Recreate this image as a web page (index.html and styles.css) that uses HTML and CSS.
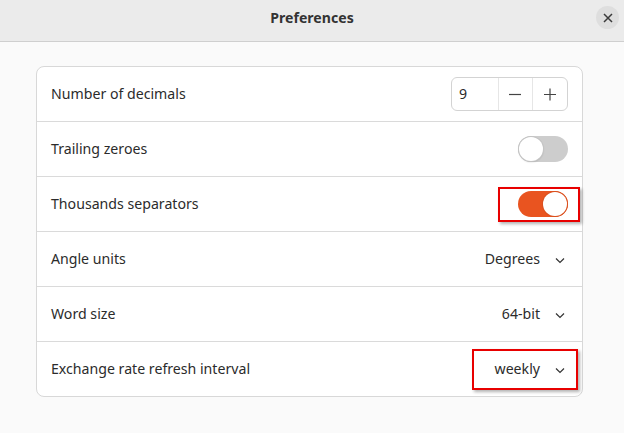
FILE: index.html
```html
<!DOCTYPE html>
<html>
<head>
<meta charset="utf-8">
<link rel="stylesheet" href="styles.css">
</head>
<body>
<div class="window">
  <header class="titlebar">
    <span class="title">Preferences</span>
    <button class="close" aria-label="Close">
      <svg width="10" height="10" viewBox="0 0 10 10"><path d="M1 1L9 9M9 1L1 9" stroke="#3a3a3a" stroke-width="1.5" fill="none"/></svg>
    </button>
  </header>
  <main class="content">
    <div class="card">
      <div class="row">
        <span class="label">Number of decimals</span>
        <div class="spin">
          <span class="spin-value">9</span>
          <span class="spin-btn"><svg width="16" height="16" viewBox="0 0 16 16"><path d="M2 8.5H14" stroke="#444" stroke-width="1.2"/></svg></span>
          <span class="spin-btn"><svg width="16" height="16" viewBox="0 0 16 16"><path d="M2 8.5H14M8 2.5V14.5" stroke="#444" stroke-width="1.2"/></svg></span>
        </div>
      </div>
      <div class="row">
        <span class="label">Trailing zeroes</span>
        <span class="switch"><span class="knob"></span></span>
      </div>
      <div class="row">
        <span class="label">Thousands separators</span>
        <span class="switch on"><span class="knob"></span></span>
        <span class="highlight hl-switch"></span>
      </div>
      <div class="row">
        <span class="label">Angle units</span>
        <span class="dropdown">Degrees<svg class="chev" width="16" height="16" viewBox="0 0 16 16"><path d="M4 6.5L8 10.5L12 6.5" stroke="#333" stroke-width="1.2" fill="none"/></svg></span>
      </div>
      <div class="row">
        <span class="label">Word size</span>
        <span class="dropdown">64-bit<svg class="chev" width="16" height="16" viewBox="0 0 16 16"><path d="M4 6.5L8 10.5L12 6.5" stroke="#333" stroke-width="1.2" fill="none"/></svg></span>
      </div>
      <div class="row">
        <span class="label">Exchange rate refresh interval</span>
        <span class="dropdown">weekly<svg class="chev" width="16" height="16" viewBox="0 0 16 16"><path d="M4 6.5L8 10.5L12 6.5" stroke="#333" stroke-width="1.2" fill="none"/></svg></span>
        <span class="highlight hl-drop"></span>
      </div>
    </div>
  </main>
</div>
</body>
</html>
```

FILE: styles.css
```css
* { box-sizing: border-box; }
html, body { margin: 0; padding: 0; }
body {
  width: 624px;
  height: 433px;
  overflow: hidden;
  background: #fafafa;
  font-family: "Noto Sans", "DejaVu Sans", sans-serif;
  color: #2b2b2b;
}
.titlebar {
  height: 42px;
  background: #ebebeb;
  border-bottom: 1px solid #cfcfcf;
  display: flex;
  align-items: center;
  justify-content: center;
  position: relative;
}
.title {
  font-weight: 700;
  font-size: 14.1px;
  color: #333;
  margin-top: -6px;
}
.close {
  position: absolute;
  right: 5px;
  top: 6px;
  width: 23px;
  height: 23px;
  border-radius: 50%;
  border: none;
  background: #dedede;
  padding: 0;
  display: flex;
  align-items: center;
  justify-content: center;
}
.content {
  padding: 24px 41px 0 36px;
}
.card {
  background: #ffffff;
  border: 1px solid #d8d8d8;
  border-radius: 8px;
}
.row {
  position: relative;
  height: 55px;
  border-bottom: 1px solid #dadada;
  display: flex;
  align-items: center;
  justify-content: space-between;
  padding: 0 14px 0 14px;
}
.row:last-child { border-bottom: none; height: 54px; }
.label {
  font-size: 14.15px;
  margin-bottom: 1px;
}
.spin {
  display: flex;
  width: 117px;
  height: 34px;
  border: 1px solid #d3d3d3;
  border-radius: 6px;
  margin-top: 0;
}
.spin-value {
  width: 47px;
  padding-left: 7px;
  padding-bottom: 1px;
  font-size: 14.15px;
  display: flex;
  align-items: center;
  border-right: 1px solid #e6e6e6;
}
.spin-btn {
  width: 34px;
  display: flex;
  align-items: center;
  justify-content: center;
}
.spin-btn + .spin-btn { border-left: 1px solid #e6e6e6; width: 35px; }
.switch {
  position: relative;
  width: 50px;
  height: 26px;
  border-radius: 13px;
  background: #cdcdcd;
  margin-top: 0;
}
.switch .knob {
  position: absolute;
  top: 1px;
  left: 1px;
  width: 24px;
  height: 24px;
  border-radius: 50%;
  background: #ffffff;
  box-shadow: 0 0 0 1px #c4c4c4, 0 1px 2px rgba(0,0,0,0.2);
}
.switch.on { background: #e95420; }
.switch.on .knob {
  left: auto;
  right: 1px;
  box-shadow: 0 0 0 1px #d9501f;
}
.dropdown {
  display: flex;
  align-items: center;
  font-size: 14.15px;
  gap: 12px;
  margin-bottom: 1px;
}
.chev { display: block; margin-top: 2px; }
.highlight {
  position: absolute;
  border: 2px solid #e80000;
  box-shadow: 2px 2px 3px rgba(0,0,0,0.3);
  pointer-events: none;
}
.hl-switch {
  left: 461px;
  top: 10px;
  width: 82px;
  height: 35px;
}
.hl-drop {
  left: 435px;
  top: 7px;
  width: 106px;
  height: 41px;
}
```
